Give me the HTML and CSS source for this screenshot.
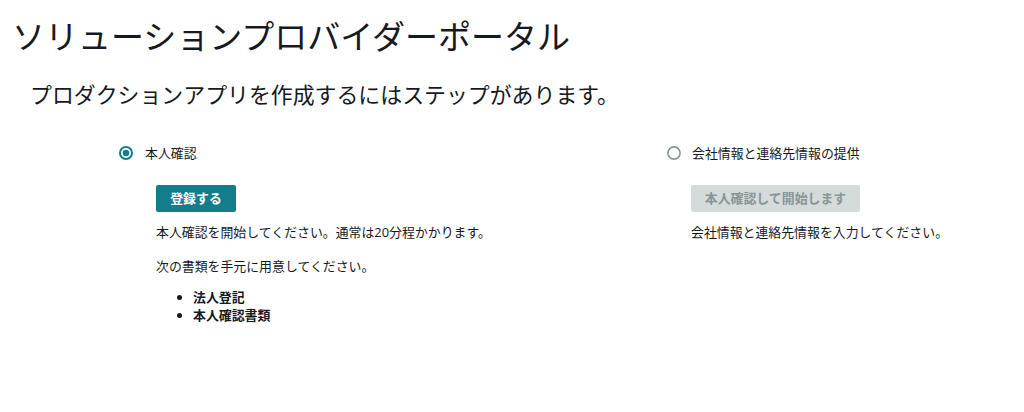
FILE: index.html
```html
<!DOCTYPE html>
<html lang="ja">
<head>
<meta charset="utf-8">
<link rel="stylesheet" href="styles.css">
</head>
<body>
  <h1 class="title">ソリューションプロバイダーポータル</h1>
  <p class="subtitle">プロダクションアプリを作成するにはステップがあります。</p>
  <div class="steps">
    <section class="step">
      <div class="step-head">
        <svg class="radio" width="14" height="14" viewBox="0 0 14 14"><circle cx="7" cy="7" r="6" fill="none" stroke="#137d8c" stroke-width="2"/><circle cx="7" cy="7" r="3.3" fill="#137d8c"/></svg>
        <span class="step-label">本人確認</span>
      </div>
      <div class="step-body step-body-left">
        <button class="btn btn-primary">登録する</button>
        <p class="text">本人確認を開始してください。通常は20分程かかります。</p>
        <p class="text text-gap">次の書類を手元に用意してください。</p>
        <ul class="docs">
          <li>法人登記</li>
          <li>本人確認書類</li>
        </ul>
      </div>
    </section>
    <section class="step">
      <div class="step-head">
        <svg class="radio" width="14" height="14" viewBox="0 0 14 14"><circle cx="7" cy="7" r="6.1" fill="none" stroke="#879596" stroke-width="1.6"/></svg>
        <span class="step-label">会社情報と連絡先情報の提供</span>
      </div>
      <div class="step-body step-body-right">
        <button class="btn btn-disabled" disabled>本人確認して開始します</button>
        <p class="text">会社情報と連絡先情報を入力してください。</p>
      </div>
    </section>
  </div>
</body>
</html>
```

FILE: styles.css
```css
* { box-sizing: border-box; }
html, body {
  margin: 0;
  padding: 0;
  background: #ffffff;
}
body {
  font-family: "Open Sans", "Noto Sans CJK JP", sans-serif;
  color: #16191f;
  font-size: 12.9px;
}
.title {
  margin: 17px 0 0 12px;
  font-size: 33px;
  line-height: 40px;
  font-weight: 400;
}
.subtitle {
  margin: 24px 0 0 30px;
  font-size: 21.9px;
  line-height: 28px;
  font-weight: 400;
}
.steps {
  display: grid;
  grid-template-columns: 548px 1fr;
  margin: 34px 0 0 119px;
}
.step-head {
  display: flex;
  align-items: center;
  height: 20px;
}
.radio {
  flex: none;
  display: block;
}
.step-label {
  margin-left: 12px;
  line-height: 20px;
}
.step:nth-child(2) .step-label { margin-left: 11px; }
.step-body {
  margin-top: 22px;
}
.step-body-left { padding-left: 37px; }
.step-body-right { padding-left: 24px; }
.btn {
  display: block;
  font-family: inherit;
  font-size: 12.9px;
  font-weight: 700;
  line-height: 17px;
  height: 27px;
  border: none;
  border-radius: 2px;
  text-align: center;
  padding: 5px 0;
}
.btn-primary {
  background: #137d8c;
  color: #ffffff;
  width: 80px;
}
.btn-disabled {
  background: #d5dbdb;
  color: #879596;
  width: 169px;
}
.text {
  margin: 11px 0 0;
  line-height: 18px;
}
.text-gap { margin-top: 16px; }
.docs {
  margin: 13px 0 0;
  padding-left: 37px;
  font-weight: 700;
  line-height: 18px;
}
```
